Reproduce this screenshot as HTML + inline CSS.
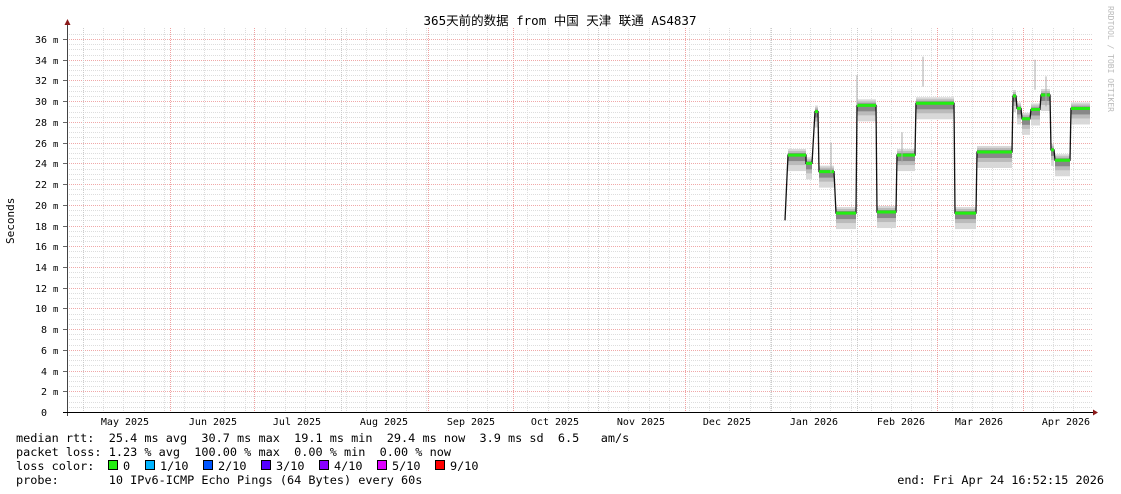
<!DOCTYPE html>
<html><head><meta charset="utf-8">
<style>
html,body{margin:0;padding:0;background:#fff;}
svg{display:block;}
text{font-family:"DejaVu Sans Mono","Liberation Mono","Noto Sans CJK SC",monospace;font-size:11.85px;fill:#000;white-space:pre;}
</style></head>
<body>
<svg id="g" width="1121" height="494" viewBox="0 0 1121 494" xmlns="http://www.w3.org/2000/svg" xml:space="preserve">
<rect width="1121" height="494" fill="#fff"/>
<g id="grid"></g>
<g id="data"></g>
<g id="axes"></g>
<text x="560" y="25" text-anchor="middle" style="font-size:12.5px;font-family:'DejaVu Sans Mono','Noto Sans CJK SC',monospace">365天前的数据 from 中国 天津 联通 AS4837</text>
<text transform="translate(1108,6) rotate(90)" style="font-size:8px;fill:#bbb">RRDTOOL / TOBI OETIKER</text>
<text transform="translate(14,244) rotate(-90)" style="font-size:11px">Seconds</text>
<text x="16" y="442">median rtt:  25.4 ms avg  30.7 ms max  19.1 ms min  29.4 ms now  3.9 ms sd  6.5   am/s</text>
<text x="16" y="456">packet loss: 1.23 % avg  100.00 % max  0.00 % min  0.00 % now</text>
<text x="16" y="470">loss color:</text>
<text x="16" y="484">probe:       10 IPv6-ICMP Echo Pings (64 Bytes) every 60s</text>
<text x="1104" y="484" text-anchor="end">end: Fri Apr 24 16:52:15 2026</text>
<g id="legend"></g>
</svg>
<script>
const NS="http://www.w3.org/2000/svg";
function el(p,t,a,txt){const e=document.createElementNS(NS,t);for(const k in a)e.setAttribute(k,a[k]);if(txt!=null)e.textContent=txt;document.getElementById(p).appendChild(e);return e;}
const X0=67,X1=1093,Y0=412,K=10.36;
const y=ms=>Y0-ms*K;
for(let m=0.5;m<=36.6;m+=0.5){ if(Math.abs(m/2-Math.round(m/2))<0.01) continue;
 el('grid','line',{x1:X0,x2:X1,y1:Math.round(y(m))+.5,y2:Math.round(y(m))+.5,stroke:'#ddd','stroke-dasharray':'1,1'});}
for(let x=83;x<X1;x+=20.2){el('grid','line',{x1:Math.round(x)+.5,x2:Math.round(x)+.5,y1:28,y2:Y0,stroke:'#ddd','stroke-dasharray':'1,1'});}
for(let m=2;m<=36;m+=2){el('grid','line',{x1:X0,x2:X1,y1:Math.round(y(m))+.5,y2:Math.round(y(m))+.5,stroke:'#f0a8a8','stroke-dasharray':'1,1'});
 el('axes','text',{x:47,y:Math.round(y(m))+4,'text-anchor':'end','style':'font-size:10px'},String(m));
 el('axes','text',{x:53,y:Math.round(y(m))+4,'style':'font-size:9px'},'m');
 el('axes','line',{x1:63,x2:67,y1:Math.round(y(m))+.5,y2:Math.round(y(m))+.5,stroke:'#666'});}
el('axes','text',{x:47,y:416,'text-anchor':'end','style':'font-size:10px'},'0');
[83,341,598,771,857].forEach(x=>el('grid','line',{x1:x+.5,x2:x+.5,y1:28,y2:Y0,stroke:'#ccc','stroke-dasharray':'1,1'}));
[170,254,428,513,685,937,1023].forEach(x=>el('grid','line',{x1:x+.5,x2:x+.5,y1:28,y2:Y0,stroke:'#f0a0a0','stroke-dasharray':'1,1'}));
[['May 2025',125],['Jun 2025',213],['Jul 2025',297],['Aug 2025',384],['Sep 2025',471],['Oct 2025',555],['Nov 2025',641],['Dec 2025',727],['Jan 2026',814],['Feb 2026',901],['Mar 2026',979],['Apr 2026',1066]].forEach(([t,x])=>el('axes','text',{x:x,y:425,'text-anchor':'middle','style':'font-size:10px'},t));
el('axes','line',{x1:67.5,x2:67.5,y1:24,y2:416,stroke:'#444'});
el('axes','line',{x1:63,x2:1094,y1:412.5,y2:412.5,stroke:'#000'});
el('axes','path',{d:'M64.5 25 L67.5 19 L70.5 25Z',fill:'#8b1a1a'});
el('axes','path',{d:'M1093 409.5 L1098 412.5 L1093 415.5Z',fill:'#8b1a1a'});
const seg=[[788,806,24.8],[806,812,24],[815,818,29],[819,834,23.2],[836,856,19.2],[857,876,29.6],[877,896,19.3],[897,915,24.8],[916,954,29.8],[955,976,19.2],[977,1012,25.1],[1013,1016,30.5],[1017,1021,29.3],[1022,1030,28.3],[1031,1040,29.2],[1041,1050,30.6],[1051,1054,25.3],[1055,1070,24.3],[1071,1090,29.3]];
seg.forEach(([a,b,m])=>{
 el('data','rect',{x:a,y:y(m)-6,width:b-a,height:22,fill:'#d8d8d8'});
 el('data','rect',{x:a,y:y(m)-4,width:b-a,height:14,fill:'#bbb'});
 el('data','rect',{x:a,y:y(m)-2,width:b-a,height:8,fill:'#888'});});
let pts=`785,${y(18.5)} `;
seg.forEach(([a,b,m])=>{pts+=`${a},${y(m)} ${b},${y(m)} `;});
el('data','polyline',{points:pts,fill:'none',stroke:'#111','stroke-width':1.3});
seg.forEach(([a,b,m])=>el('data','line',{x1:a,x2:b,y1:y(m),y2:y(m),stroke:'#22ee11','stroke-width':3}));
[[857,32.5],[923,34.3],[1035,34],[1046,32.4],[831,26],[902,27]].forEach(([x,m])=>el('data','line',{x1:x,x2:x,y1:y(m),y2:y(m)+30,stroke:'#aaa'}));
[['#22ee11','0',108],['#00b4ff','1/10',145],['#0055ff','2/10',203],['#5500ff','3/10',261],['#8800ff','4/10',319],['#dd00ff','5/10',377],['#ff0000','9/10',435]].forEach(([c,t,x])=>{
 el('legend','rect',{x:x+.5,y:460.5,width:9,height:9,fill:c,stroke:'#000'});
 el('legend','text',{x:x+15,y:470},t);});
</script>
</body></html>
